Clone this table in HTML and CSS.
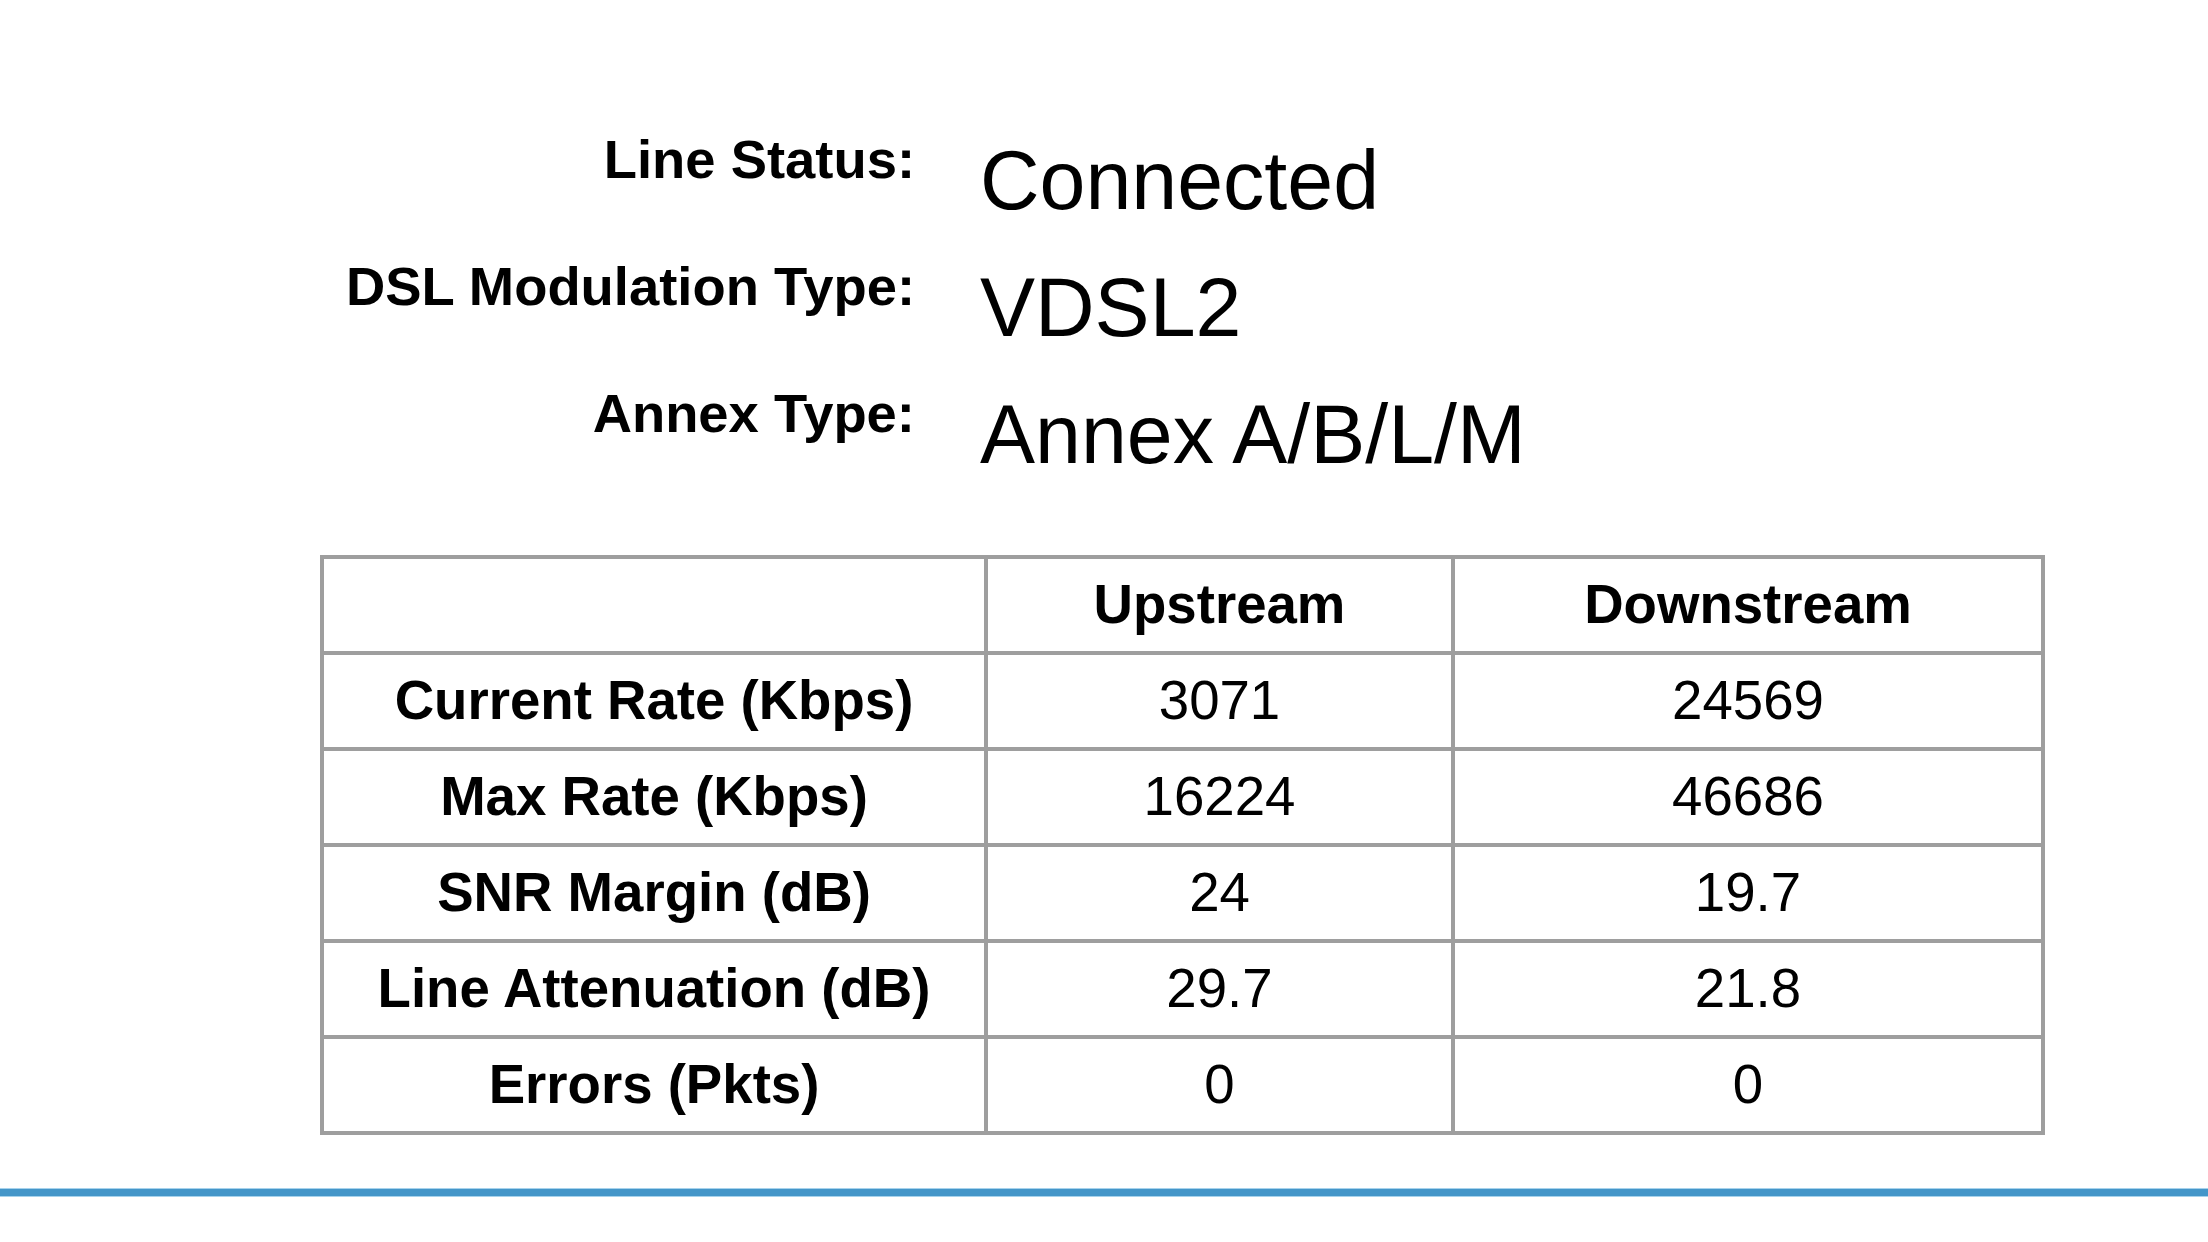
FILE: index.html
```html
<!DOCTYPE html>
<html lang="en">
<head>
<meta charset="utf-8">
<title>DSL Status</title>
<link rel="stylesheet" href="styles.css">
</head>
<body>
<main class="page">
  <section class="info">
    <div class="info-label">Line Status:</div>
    <div class="info-value">Connected</div>
    <div class="info-label">DSL Modulation Type:</div>
    <div class="info-value">VDSL2</div>
    <div class="info-label">Annex Type:</div>
    <div class="info-value">Annex A/B/L/M</div>
  </section>

  <section class="stats" role="table">
    <div class="cell head" role="columnheader"></div>
    <div class="cell head" role="columnheader">Upstream</div>
    <div class="cell head" role="columnheader">Downstream</div>

    <div class="cell head" role="rowheader">Current Rate (Kbps)</div>
    <div class="cell" role="cell">3071</div>
    <div class="cell" role="cell">24569</div>

    <div class="cell head" role="rowheader">Max Rate (Kbps)</div>
    <div class="cell" role="cell">16224</div>
    <div class="cell" role="cell">46686</div>

    <div class="cell head" role="rowheader">SNR Margin (dB)</div>
    <div class="cell" role="cell">24</div>
    <div class="cell" role="cell">19.7</div>

    <div class="cell head" role="rowheader">Line Attenuation (dB)</div>
    <div class="cell" role="cell">29.7</div>
    <div class="cell" role="cell">21.8</div>

    <div class="cell head" role="rowheader">Errors (Pkts)</div>
    <div class="cell" role="cell">0</div>
    <div class="cell" role="cell">0</div>
  </section>

  <div class="rule"></div>
</main>
</body>
</html>
```

FILE: styles.css
```css
html, body {
  margin: 0;
  padding: 0;
  background: #ffffff;
}

body {
  font-family: "Liberation Sans", Arial, sans-serif;
  color: #000000;
  width: 2208px;
  height: 1242px;
  overflow: hidden;
}

.page {
  display: flex;
  flex-direction: column;
}

.info {
  display: grid;
  grid-template-columns: 915px auto;
  column-gap: 65px;
  row-gap: 34px;
  align-items: start;
  padding-top: 134px;
}

.info-label {
  font-size: 54.4px;
  font-weight: bold;
  line-height: 52px;
  text-align: right;
}

.info-value {
  font-size: 82.5px;
  line-height: 93px;
}

.stats {
  margin-top: 74px;
  margin-left: 320px;
  width: 1725px;
  box-sizing: border-box;
  display: grid;
  grid-template-columns: 664px 467px 590px;
  grid-auto-rows: 96px;
  border-top: 4px solid #9e9e9e;
  border-left: 4px solid #9e9e9e;
}

.cell {
  display: flex;
  align-items: center;
  justify-content: center;
  box-sizing: border-box;
  border-right: 4px solid #9e9e9e;
  border-bottom: 4px solid #9e9e9e;
  font-size: 54.6px;
  line-height: 62px;
  white-space: nowrap;
}

.head {
  font-weight: bold;
}

.rule {
  margin-top: 53px;
  height: 7px;
  background: #4496c9;
  border-top: 1px solid #a6d2ec;
  border-bottom: 1px solid #a6d2ec;
}
```
